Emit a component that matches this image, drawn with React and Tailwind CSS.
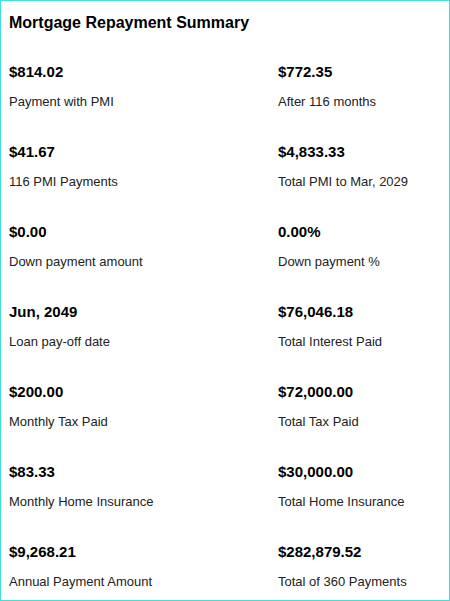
import React from 'react';

const rows = [
  [['$814.02', 'Payment with PMI'], ['$772.35', 'After 116 months']],
  [['$41.67', '116 PMI Payments'], ['$4,833.33', 'Total PMI to Mar, 2029']],
  [['$0.00', 'Down payment amount'], ['0.00%', 'Down payment %']],
  [['Jun, 2049', 'Loan pay-off date'], ['$76,046.18', 'Total Interest Paid']],
  [['$200.00', 'Monthly Tax Paid'], ['$72,000.00', 'Total Tax Paid']],
  [['$83.33', 'Monthly Home Insurance'], ['$30,000.00', 'Total Home Insurance']],
  [['$9,268.21', 'Annual Payment Amount'], ['$282,879.52', 'Total of 360 Payments']],
];

function Stat({ value, label }) {
  return (
    <div className="flex flex-col">
      <div className="h-[18px] text-[15px] leading-[18px] font-bold text-black">{value}</div>
      <div className="mt-[13px] h-4 text-[13px] leading-4 text-[#222]">{label}</div>
    </div>
  );
}

export default function App() {
  return (
    <div
      className="w-[450px] h-[601px] border border-[#40e0e0] bg-white px-2 pt-3 text-black"
      style={{ fontFamily: '"Liberation Sans", Arial, sans-serif' }}
    >
      {/* Title */}
      <h1 className="h-5 text-base leading-5 font-bold">Mortgage Repayment Summary</h1>

      {/* Summary grid */}
      <div className="mt-[30px] grid grid-cols-[269px_1fr] gap-y-[33px]">
        {rows.map((row, i) => (
          <React.Fragment key={i}>
            <Stat value={row[0][0]} label={row[0][1]} />
            <Stat value={row[1][0]} label={row[1][1]} />
          </React.Fragment>
        ))}
      </div>
    </div>
  );
}
